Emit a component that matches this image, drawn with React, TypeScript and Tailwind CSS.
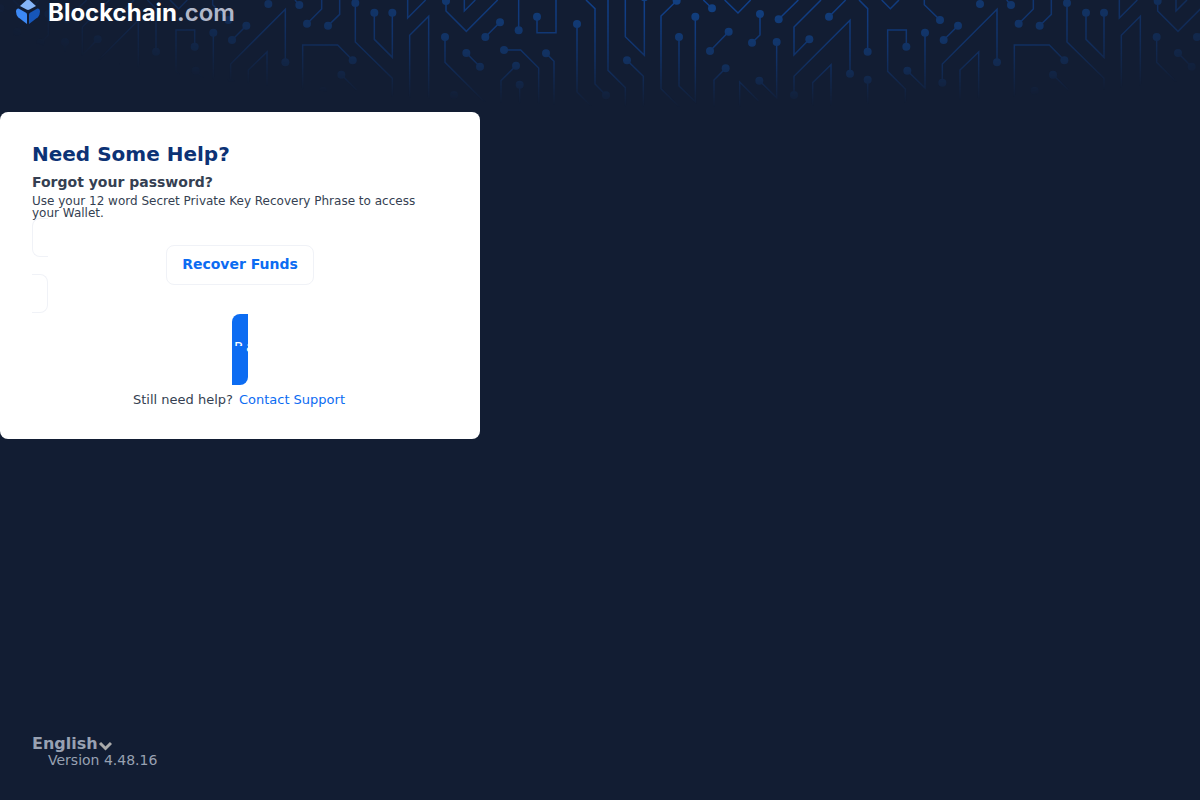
import React from 'react';

type Trace = [string, [number, number][]];

// Each trace: polyline points and the pads (dots) on it.
const traces: Trace[] = [
  ['885,0 898,15', [[898, 15]]],
  ['921,71 965,27 965,0', [[921, 71]]],
  ['984,77 1019,43 1019,0', [[984, 77]]],
  ['1066,9 1066,126 1177,235 1177,330', [[1066, 9]]],
  ['1123,38 1123,118 1177,172 1177,38', [[1123, 38], [1177, 38]]],
  ['1223,0 1223,54 1277,0', [[805, 12]]],
  ['1229,330 1229,106 1286,49 1286,330', []],
  ['745,330 745,210 801,156 801,330', []],
  ['908,330 908,135 1013,135 1058,181', [[1058, 181]]],
  ['1024,224 1070,270', [[1024, 224], [969, 272]]],
  ['1338,3 1338,33 1399,94 1493,0', [[1338, 3]]],
  ['1393,0 1393,33 1426,0', []],
  ['1335,111 1335,187 1460,312', [[1335, 111], [1362, 285]]],
  ['1399,159 1440,200', [[1399, 159], [1440, 200]]],
  ['1500,67 1456,111', [[1500, 67], [1456, 111]]],
  ['1556,0 1556,91', [[1556, 91]]],
  ['1611,50 1611,98 1668,98 1668,0', [[1611, 50]]],
  ['1731,72 1731,276 1775,320', [[1731, 72]]],
  ['1758,0 1785,26 1785,252 1818,286', [[1818, 286]]],
  ['1824,0 1824,211 1876,263 1876,330', []],
  ['1876,0 1876,110 1933,166 1933,0', [[1933, -8]]],
  ['1881,181 1930,229 1930,330', [[1881, 181]]],
  ['2030,2 1983,48 1983,266 2040,323', [[2030, 2]]],
  ['2037,111 2037,258 2086,305 2086,50', [[2037, 111], [2086, 50]]],
  ['2110,0 2136,25', [[2136, 25]]],
  ['2130,153 2186,95', [[2130, 153], [2186, 95]]],
  ['1512,150 1562,150 1616,204 1616,330', [[1512, 150]]],
  ['1638,160 1662,184 1662,330', [[1638, 160]]],
  ['1548,197 1503,242 1503,330', [[1548, 197]]],
  ['1559,254 1559,330', [[1559, 254]]],
  ['2142,330 2142,240 2177,205', [[2177, 205]]],
  ['2174,0 2214,39 2252,0', []],
  ['2280,42 2280,105 2256,128', [[2280, 42], [2256, 128]]],
  ['2336,58 2395,0', [[2336, 58]]],
  ['2330,126 2330,293 2278,242', [[2330, 126], [2278, 242]]],
  ['2463,0 2382,81 2382,165 2428,118', [[2428, 118]]],
  ['2487,50 2537,0', [[2487, 50]]],
  ['2382,285 2382,229 2550,61 2550,221', [[2382, 285], [2550, 221]]],
  ['2438,330 2438,248 2493,194 2493,330', []],
  ['2219,330 2219,246 2275,302', []],
  ['2577,0 2603,26 2603,155', [[2603, 155]]],
  ['2603,239 2603,330', [[2603, 239]]],
  ['2645,0 2671,26 2697,0', []],
  ['2719,140 2719,90 2663,90 2663,214 2716,267 2716,330', [[2719, 140]]],
  ['2722,212 2775,264 2775,98', [[2722, 212], [2775, 98]]],
  ['2773,0 2773,14 2820,60', [[2820, 60]]],
  ['2831,120 2874,77', [[2831, 120], [2874, 77]]],
  ['2827,248 2827,192 2991,28 2991,187', [[2827, 248], [2991, 187]]],
];

function CircuitBackdrop() {
  return (
    <svg aria-hidden="true" viewBox="0 0 3600 330" className="pointer-events-none absolute inset-x-0 top-0 w-full">
      <defs>
        <radialGradient id="fade" gradientUnits="userSpaceOnUse" cx="0" cy="0" r="1" gradientTransform="translate(2112 0) scale(2200 322)">
          <stop offset="0.1" stopColor="#fff" />
          <stop offset="0.55" stopColor="#fff" stopOpacity="0.6" />
          <stop offset="0.85" stopColor="#fff" stopOpacity="0.2" />
          <stop offset="1" stopColor="#fff" stopOpacity="0" />
        </radialGradient>
        <mask id="fadeMask" maskUnits="userSpaceOnUse" x="0" y="0" width="3600" height="330">
          <rect width="3600" height="330" fill="url(#fade)" />
        </mask>
        <g id="tile">
          {traces.map(([points, pads]) => (
            <g key={points}>
              <polyline points={points} fill="none" stroke="#11408a" strokeWidth="4.5" />
              {pads.map(([x, y]) => (
                <circle key={`${x}-${y}`} cx={x} cy={y} r="12" fill="#123f80" />
              ))}
            </g>
          ))}
        </g>
      </defs>
      <g mask="url(#fadeMask)">
        <use href="#tile" x="-2135" />
        <use href="#tile" />
        <use href="#tile" x="2135" />
      </g>
    </svg>
  );
}

function Logo() {
  return (
    <a href="#" aria-label="Blockchain.com" className="flex items-start gap-2 font-['Inter',sans-serif] text-2xl leading-[26px]">
      <svg aria-hidden="true" viewBox="0 0 24 24" className="size-6">
        <path d="M12 -1.2 L20 6 L13.5 9.6 Q12 10.3 10.5 9.6 L4 6 Z" fill="#85b5f8" />
        <path d="M2.6 8.6 L10 12.7 Q11 13.3 11 14.5 V24 L2.2 17.2 Q1 16.2 .6 14.8 L0 11.5 Q.2 8.4 2.6 8.6 Z" fill="#3d89f5" />
        <path d="M21.4 8.6 L14 12.7 Q13 13.3 13 14.5 V24 L21.8 17.2 Q23 16.2 23.4 14.8 L24 11.5 Q23.8 8.4 21.4 8.6 Z" fill="#1656b9" />
      </svg>
      <span>
        <span className="font-bold text-white">Blockchain</span>
        <span className="font-semibold text-[#b0b7ca]">.com</span>
      </span>
    </a>
  );
}

export default function App() {
  return (
    <div className="relative flex min-h-screen flex-col overflow-hidden bg-[#121d33] font-['DejaVu_Sans',sans-serif]">
      <CircuitBackdrop />
      <header className="relative flex px-4 pb-[86px]">
        <Logo />
      </header>
      <main className="relative w-full max-w-[480px] rounded-lg bg-white p-8 text-[#353f52]">
        <h1 className="text-xl leading-5 font-bold text-[#0c3275]">Need Some Help?</h1>
        <h2 className="mt-3 text-sm leading-3 font-bold">Forgot your password?</h2>
        <p className="mt-[7px] pr-6 text-xs leading-3">Use your 12 word Secret Private Key Recovery Phrase to access your Wallet.</p>
        <div className="flex">
          <div className="-mt-px flex w-4 flex-col gap-[17px]" aria-hidden="true">
            <div className="h-[39px] rounded-l-lg border border-r-0 border-[#f0f2f7]" />
            <div className="h-[39px] rounded-r-lg border border-l-0 border-[#f0f2f7]" />
          </div>
          <div className="flex grow flex-col items-center pt-[26px]">
            <button type="button" className="h-10 w-[148px] rounded-lg border border-[#f0f2f7] pb-0.5 text-sm font-bold text-[#0c6cf2]">
              Recover Funds
            </button>
            <button type="button" className="mt-[29px] flex h-[71px] w-4 items-start overflow-hidden rounded-tl-lg rounded-br-lg bg-[#0c6cf2] pt-[23px] pl-0.5 text-sm text-white">
              <span className="h-[9px] w-3 shrink-0 overflow-hidden text-left leading-5">R</span>
              <span className="leading-5">a</span>
            </button>
          </div>
          <div className="w-4" />
        </div>
        <p className="mt-2 flex justify-center gap-1.5 pr-0.5 text-[13px] leading-[14px]">
          <span>Still need help?</span>
          <a href="#" className="text-[#0c6cf2]">Contact Support</a>
        </p>
      </main>
      <footer className="relative mt-auto px-8 pb-8 text-[#98a1b2]">
        <button type="button" className="flex items-center text-base leading-4 font-bold">
          English
          <svg aria-hidden="true" viewBox="0 0 14 10" className="mt-1 h-2.5 w-3.5">
            <path d="M2 2 L7.5 7.5 L13 2" fill="none" stroke="#aaaaaa" strokeWidth="3" />
          </svg>
        </button>
        <p className="pl-4 text-sm leading-4">Version 4.48.16</p>
      </footer>
    </div>
  );
}
